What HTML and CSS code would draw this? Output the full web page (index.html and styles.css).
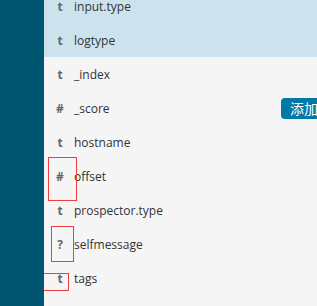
FILE: index.html
```html
<!DOCTYPE html>
<html>
<head>
<meta charset="utf-8">
<link rel="stylesheet" href="styles.css">
</head>
<body>
<div class="app">
  <aside class="sidebar"></aside>
  <main class="main">
    <ul class="fields">
      <li class="field selected"><span class="type">t</span><span class="name">input.type</span></li>
      <li class="field selected"><span class="type">t</span><span class="name">logtype</span></li>
      <li class="field"><span class="type">t</span><span class="name">_index</span></li>
      <li class="field"><span class="type">#</span><span class="name">_score</span><button class="add">添加</button></li>
      <li class="field"><span class="type">t</span><span class="name">hostname</span></li>
      <li class="field"><span class="type">#</span><span class="name">offset</span></li>
      <li class="field"><span class="type">t</span><span class="name">prospector.type</span></li>
      <li class="field"><span class="type">?</span><span class="name">selfmessage</span></li>
      <li class="field"><span class="type">t</span><span class="name">tags</span></li>
    </ul>
    <div class="mark mark-offset"></div>
    <div class="mark mark-self"></div>
    <div class="mark mark-tags"></div>
  </main>
</div>
</body>
</html>
```
FILE: styles.css
```css
html, body {
  margin: 0;
  padding: 0;
  overflow: hidden;
  background: #f5f5f5;
}
body {
  width: 317px;
  height: 306px;
  font-family: "Open Sans", "Noto Sans CJK SC", sans-serif;
}
.app {
  display: flex;
  height: 306px;
}
.sidebar {
  width: 44px;
  flex: none;
  background: #005571;
}
.main {
  position: relative;
  flex: 1;
  overflow: hidden;
  background: #f5f5f5;
}
.fields {
  list-style: none;
  margin: -11px 0 0 0;
  padding: 0;
  width: 320px;
}
.field {
  display: grid;
  grid-template-columns: 16px 207px auto;
  column-gap: 6px;
  align-items: center;
  height: 34px;
  padding-left: 8px;
  box-sizing: border-box;
}
.field.selected {
  background: #cce3ee;
}
.type {
  text-align: center;
  font-size: 12px;
  font-weight: 700;
  color: #666;
}
.name {
  font-size: 12px;
  color: #333;
  white-space: nowrap;
}
.add {
  justify-self: start;
  margin-left: -6px;
  height: 21px;
  padding: 0 9px;
  border: none;
  border-radius: 4px;
  background: #0079a5;
  color: #fff;
  font-family: "Noto Sans CJK SC", sans-serif;
  font-size: 14px;
  line-height: 21px;
  white-space: nowrap;
}
.mark {
  position: absolute;
  border: 1px solid #f03e3e;
  box-sizing: border-box;
}
.mark-offset {
  left: 4px;
  top: 157px;
  width: 29px;
  height: 44px;
}
.mark-self {
  left: 7px;
  top: 226px;
  width: 23px;
  height: 36px;
}
.mark-tags {
  left: -1px;
  top: 273px;
  width: 26px;
  height: 18px;
}
```
